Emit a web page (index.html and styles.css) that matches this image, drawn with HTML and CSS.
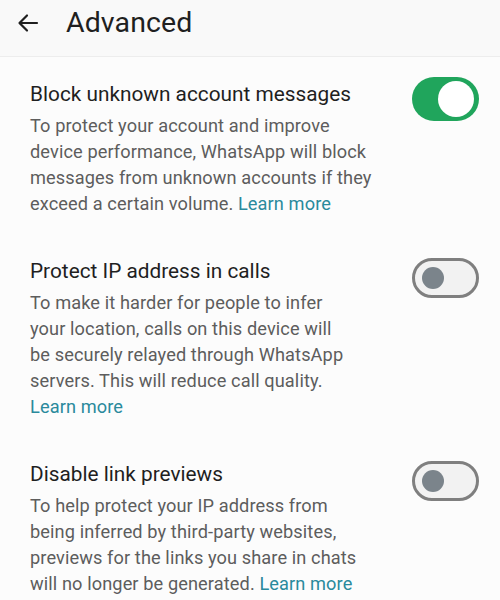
FILE: index.html
```html
<!DOCTYPE html>
<html lang="en">
<head>
  <meta charset="UTF-8">
  <title>Advanced</title>
  <link rel="stylesheet" href="styles.css">
</head>
<body>

<header class="topbar">
  <svg class="back" width="24" height="24" viewBox="0 0 24 24">
    <path d="M21 12H4M11 4.5L3.5 12l7.5 7.5" fill="none" stroke="#1f1f1f" stroke-width="2.2" stroke-linecap="round" stroke-linejoin="round"/>
  </svg>
  <h1>Advanced</h1>
</header>

<section class="setting">
  <div class="text">
    <h2>Block unknown account messages</h2>
    <p>To protect your account and improve<br>device performance, WhatsApp will block<br>messages from unknown accounts if they<br>exceed a certain volume. <a href="#">Learn more</a></p>
  </div>
  <span class="toggle on"><span class="knob"></span></span>
</section>

<section class="setting">
  <div class="text">
    <h2>Protect IP address in calls</h2>
    <p>To make it harder for people to infer<br>your location, calls on this device will<br>be securely relayed through WhatsApp<br>servers. This will reduce call quality.<br><a href="#">Learn more</a></p>
  </div>
  <span class="toggle"><span class="knob"></span></span>
</section>

<section class="setting">
  <div class="text">
    <h2>Disable link previews</h2>
    <p>To help protect your IP address from<br>being inferred by third-party websites,<br>previews for the links you share in chats<br>will no longer be generated. <a href="#">Learn more</a></p>
  </div>
  <span class="toggle"><span class="knob"></span></span>
</section>

</body>
</html>
```

FILE: styles.css
```css
body { margin: 0; background: #fcfcfc; font-family: Roboto, "Noto Sans", sans-serif; color: #1f1f1f; }

.topbar { display: flex; align-items: center; height: 56px; border-bottom: 1px solid #ededed; background: #f9f9f9; padding-left: 16px; }
.topbar .back { margin-top: -10px; }
.topbar h1 { margin: -12px 0 0 26px; font-size: 28.5px; font-weight: 400; letter-spacing: 0.1px; }

.setting { display: flex; justify-content: space-between; align-items: flex-start; padding: 24px 21px 16px 30px; }
.setting + .setting { padding-top: 25px; }
.text { width: 360px; white-space: nowrap; }
.text h2 { margin: 0; font-size: 20.8px; font-weight: 400; line-height: 26px; }
.text p { margin: 6px 0 0; font-size: 18.2px; line-height: 26px; letter-spacing: 0.1px; color: #5d5d5d; }
.text a { color: #2a8a9c; text-decoration: none; }

.toggle { position: relative; flex: none; box-sizing: border-box; width: 67px; height: 40px; border-radius: 20px; border: 3px solid #7f7f7f; background: #f2f2f2; margin-top: 0; }
.toggle .knob { position: absolute; left: 7px; top: 6px; width: 22px; height: 22px; border-radius: 50%; background: #7b848b; }
.toggle.on { height: 44px; border-radius: 22px; border: none; background: #20a55c; margin-top: -4px; }
.toggle.on .knob { left: auto; right: 5px; top: 4px; width: 36px; height: 36px; background: #fff; }
```
